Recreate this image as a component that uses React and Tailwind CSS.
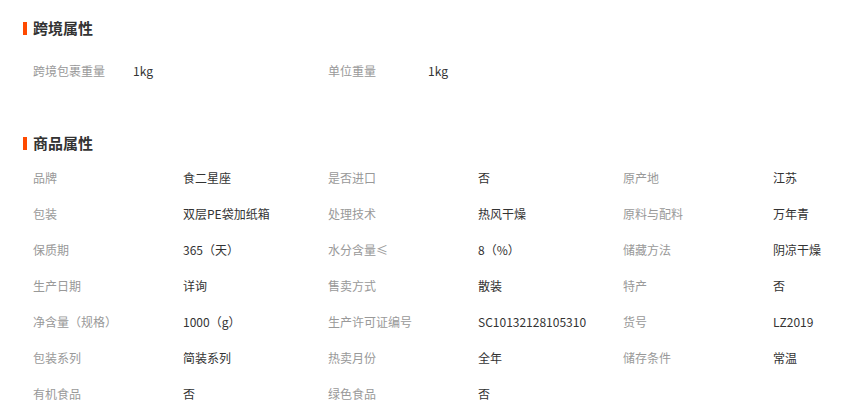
import React from "react";

const crossBorder = [
  ["跨境包裹重量", "1kg"],
  ["单位重量", "1kg"],
];

const goods = [
  ["品牌", "食二星座"],
  ["是否进口", "否"],
  ["原产地", "江苏"],
  ["包装", "双层PE袋加纸箱"],
  ["处理技术", "热风干燥"],
  ["原料与配料", "万年青"],
  ["保质期", "365（天）"],
  ["水分含量≤", "8（%）"],
  ["储藏方法", "阴凉干燥"],
  ["生产日期", "详询"],
  ["售卖方式", "散装"],
  ["特产", "否"],
  ["净含量（规格）", "1000（g）"],
  ["生产许可证编号", "SC10132128105310"],
  ["货号", "LZ2019"],
  ["包装系列", "简装系列"],
  ["热卖月份", "全年"],
  ["储存条件", "常温"],
  ["有机食品", "否"],
  ["绿色食品", "否"],
];

const Title = ({ children }) => (
  <div className="flex items-center h-5">
    <span className="w-[4px] h-[13px] bg-[#ff4a00]" />
    <span className="ml-[6px] text-[15px] font-bold text-[#333]">{children}</span>
  </div>
);

const Attr = ({ label, value, labelWidth }) => (
  <div className="flex items-center w-[295px] h-9 text-[12px]">
    <span className={`${labelWidth} text-[#999]`}>{label}</span>
    <span className="text-[#333]">{value}</span>
  </div>
);

export default function App() {
  return (
    <div
      className="w-[868px] h-[420px] bg-white overflow-hidden pl-[23px] pt-[18px]"
      style={{ fontFamily: '"Microsoft YaHei", "Noto Sans CJK SC", sans-serif' }}
    >
      <Title>跨境属性</Title>
      <div className="flex flex-wrap pl-[10px] mt-[15px]">
        {crossBorder.map(([l, v]) => (
          <Attr key={l} label={l} value={v} labelWidth="w-[100px]" />
        ))}
      </div>

      <div className="mt-[44px]">
        <Title>商品属性</Title>
      </div>
      <div className="flex flex-wrap pl-[10px] mt-[7px] w-[900px]">
        {goods.map(([l, v]) => (
          <Attr key={l} label={l} value={v} labelWidth="w-[150px]" />
        ))}
      </div>
    </div>
  );
}
